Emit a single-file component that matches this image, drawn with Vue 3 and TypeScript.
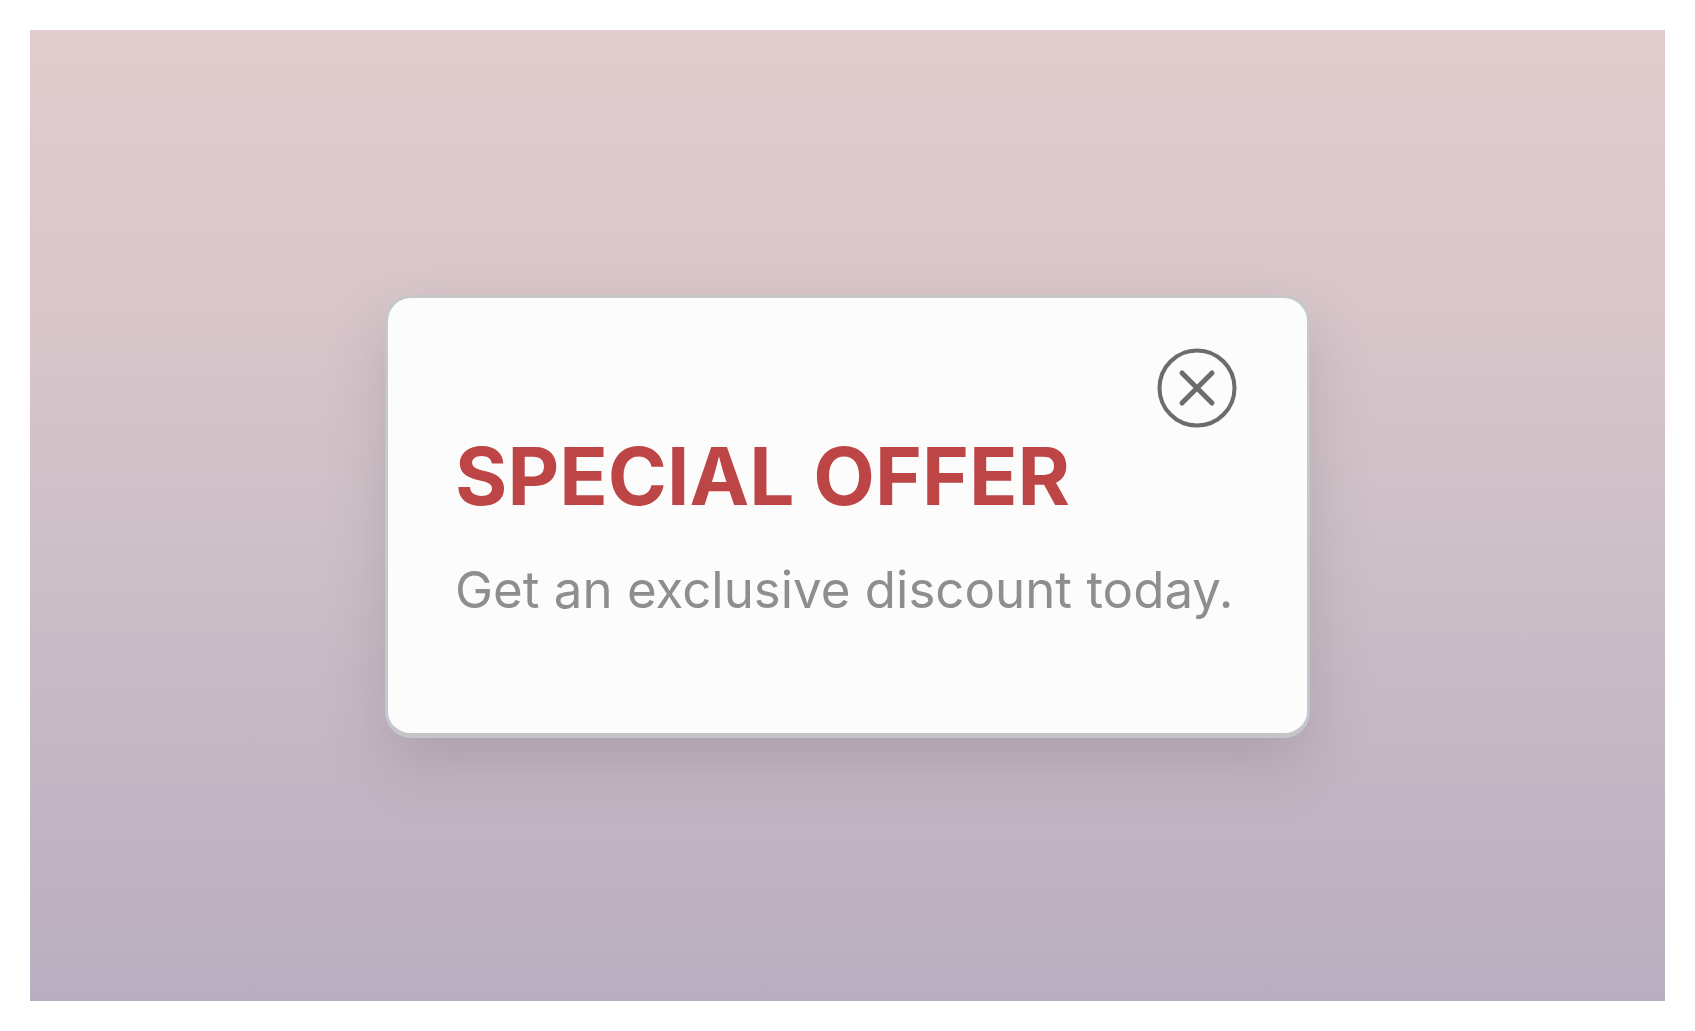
<script setup lang="ts">
import { ref } from 'vue'

const title = 'SPECIAL OFFER'
const message = 'Get an exclusive discount today.'
const open = ref(true)
</script>

<template>
  <main class="page">
    <div class="stage">
      <section v-if="open" class="card" role="dialog" aria-labelledby="offer-title">
        <button class="close" type="button" aria-label="Close" @click="open = false">
          <svg viewBox="0 0 80 80" fill="none" stroke="#6b6c6e" stroke-linecap="round" aria-hidden="true">
            <circle cx="40" cy="40" r="37.5" stroke-width="4" />
            <path d="M25 25 55 55M55 25 25 55" stroke-width="5" />
          </svg>
        </button>
        <h1 id="offer-title" class="title">{{ title }}</h1>
        <p class="message">{{ message }}</p>
      </section>
    </div>
  </main>
</template>

<style>
body {
  background: #ffffff;
}
</style>

<style scoped>
.page {
  box-sizing: border-box;
  display: flex;
  min-height: 100vh;
  padding: 30px;
  font-family: Inter, 'Liberation Sans', sans-serif;
}

.stage {
  flex: 1;
  display: flex;
  align-items: center;
  justify-content: center;
  padding-top: 2px;
  background: linear-gradient(180deg, #e1cccd 0%, #dac7ca 25%, #cfc0c8 50%, #c3b5c3 78%, #b9aec0 100%);
}

.card {
  box-sizing: border-box;
  display: flex;
  flex-direction: column;
  width: 925px;
  max-width: 100%;
  padding: 50px 70px 113px 67px;
  border: 3px solid #c4c8cd;
  border-bottom: 5px solid #c5c5c8;
  border-radius: 26px;
  background: #fcfcfc;
  box-shadow: 0 26px 60px rgba(90, 80, 90, 0.22);
}

.close {
  align-self: flex-end;
  width: 80px;
  height: 80px;
  padding: 0;
  border: 0;
  background: none;
  cursor: pointer;
}

.close svg {
  display: block;
  width: 100%;
  height: 100%;
}

.title {
  margin: 8px 0 0;
  color: #bd4545;
  font-size: 80px;
  font-weight: 700;
  line-height: 80px;
  white-space: nowrap;
}

.message {
  margin: 44px 0 0;
  color: #8d8e90;
  font-size: 51px;
  font-weight: 400;
  line-height: 60px;
  white-space: nowrap;
}
</style>
